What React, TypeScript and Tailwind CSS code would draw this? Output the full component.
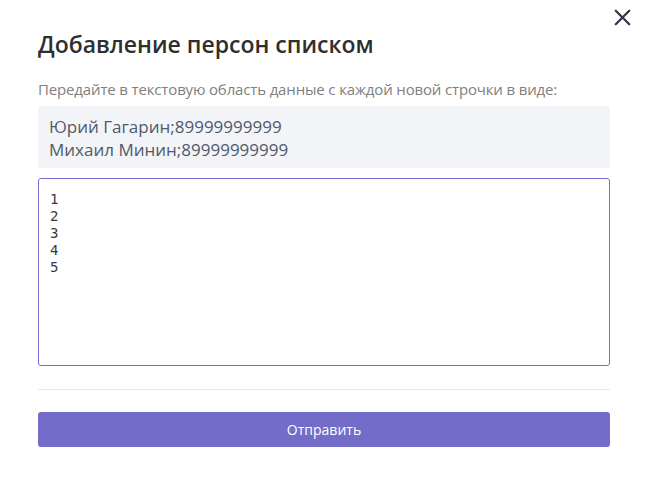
import { X } from 'lucide-react'

export default function App() {
  return (
    <div className="relative w-[648px] h-[484px] bg-white font-['Open_Sans',sans-serif]">
      <button className="absolute right-[12px] top-[4px] text-[#2d3748]">
        <X size={27} strokeWidth={2} />
      </button>
      <div className="flex flex-col px-[38px] pt-[28px]">
        <h2 className="text-[23px] leading-[32px] font-semibold text-[#2f2f2f]">
          Добавление персон списком
        </h2>
        <p className="mt-[18px] text-[15px] leading-[22px] text-[#808080] tracking-[-0.15px]">
          Передайте в текстовую область данные с каждой новой строчки в виде:
        </p>
        <div className="mt-[6px] h-[62px] rounded-[3px] bg-[#f3f4f8] px-[11px] pt-[9px] text-[17px] leading-[23px] text-[#4f5a6b]">
          <div>Юрий Гагарин;89999999999</div>
          <div>Михаил Минин;89999999999</div>
        </div>
        <textarea
          autoFocus
          className="mt-[10px] h-[188px] resize-none rounded-[3px] border border-[#746cd0] px-[11px] py-[12px] font-['DejaVu_Sans_Mono',monospace] text-[14px] leading-[17px] text-[#3a3a3a] caret-[#333] outline-none"
          defaultValue={'1\n2\n3\n4\n5'}
        />
        <div className="mt-[23px] h-px bg-[#e6e6e6]" />
        <button className="mt-[22px] h-[35px] rounded-[3px] bg-[#736dc9] text-[14px] text-white">
          Отправить
        </button>
      </div>
    </div>
  )
}
